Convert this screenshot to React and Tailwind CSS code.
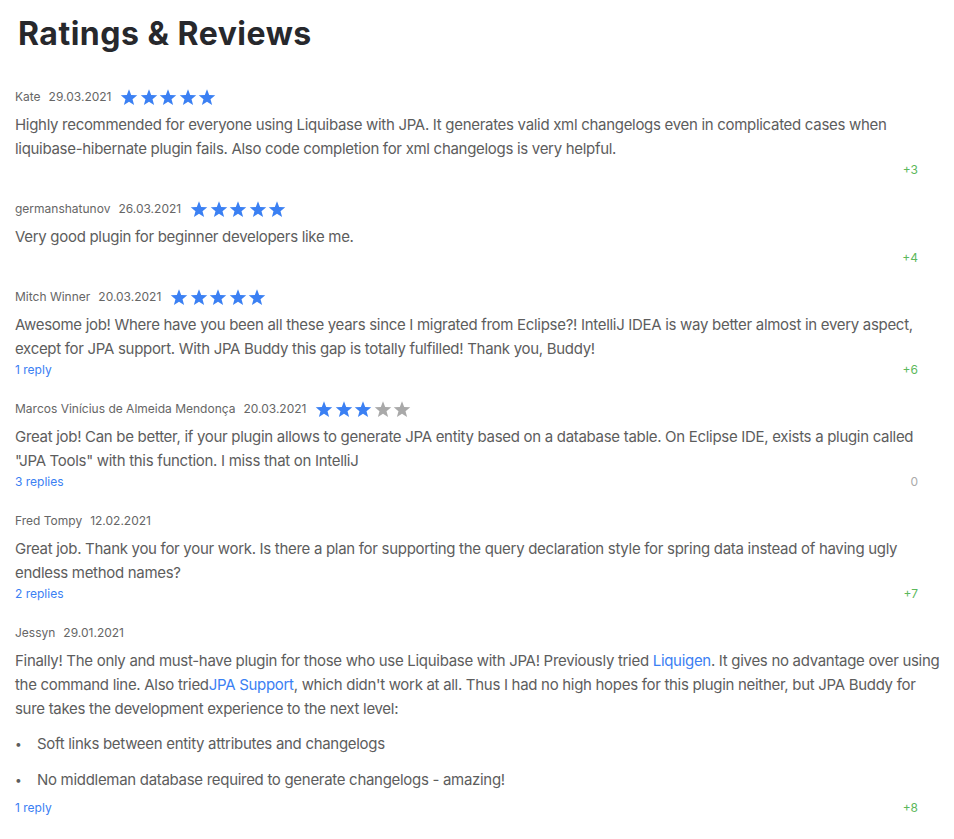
const reviews = [
  {
    author: 'Kate',
    date: '29.03.2021',
    rating: 5,
    body: ['Highly recommended for everyone using Liquibase with JPA. It generates valid xml changelogs even in complicated cases when liquibase-hibernate plugin fails. Also code completion for xml changelogs is very helpful.'],
    votes: '+3',
  },
  {
    author: 'germanshatunov',
    date: '26.03.2021',
    rating: 5,
    body: ['Very good plugin for beginner developers like me.'],
    votes: '+4',
  },
  {
    author: 'Mitch Winner',
    date: '20.03.2021',
    rating: 5,
    body: ['Awesome job! Where have you been all these years since I migrated from Eclipse?! IntelliJ IDEA is way better almost in every aspect, except for JPA support. With JPA Buddy this gap is totally fulfilled! Thank you, Buddy!'],
    replies: '1 reply',
    votes: '+6',
  },
  {
    author: 'Marcos Vinícius de Almeida Mendonça',
    date: '20.03.2021',
    rating: 3,
    body: ['Great job! Can be better, if your plugin allows to generate JPA entity based on a database table. On Eclipse IDE, exists a plugin called "JPA Tools" with this function. I miss that on IntelliJ'],
    replies: '3 replies',
    votes: '0',
  },
  {
    author: 'Fred Tompy',
    date: '12.02.2021',
    body: ['Great job. Thank you for your work. Is there a plan for supporting the query declaration style for spring data instead of having ugly endless method names?'],
    replies: '2 replies',
    votes: '+7',
  },
];

function Star({ on }) {
  return (
    <svg viewBox="0 0 24 24" className={on ? 'w-[18px] h-[18px] fill-[#3b80f3]' : 'w-[18px] h-[18px] fill-[#a9a9a9]'}>
      <path d="M12 1.8l2.9 7.6 8.1.4-6.3 5.1 2.1 7.9L12 18.3l-6.8 4.5 2.1-7.9L1 9.8l8.1-.4z" />
    </svg>
  );
}

function Meta({ author, date, rating }) {
  return (
    <div className="flex items-center h-5 text-xs text-[#666]">
      <span>{author}</span>
      <span className="ml-2">{date}</span>
      {rating && (
        <div className="flex ml-[9px] gap-[1.5px]">
          {[1, 2, 3, 4, 5].map(i => <Star key={i} on={i <= rating} />)}
        </div>
      )}
    </div>
  );
}

function Footer({ replies, votes }) {
  return (
    <div className="flex justify-between items-center h-[18px] text-xs pr-[28px]">
      <span className="text-[#3b80f3]">{replies}</span>
      <span className={votes === '0' ? 'text-[#aaa]' : 'text-[#5cb85c]'}>{votes}</span>
    </div>
  );
}

export default function App() {
  return (
    <div className="bg-white min-h-screen pl-[15px] pr-[8px] pt-[12px] font-['Inter','Liberation_Sans',sans-serif]">
      <h1 className="ml-[3px] text-[32px] leading-[44px] font-bold text-[#27282c] tracking-[0.5px]">Ratings &amp; Reviews</h1>
      <div className="mt-[31px] flex flex-col gap-5">
        {reviews.map((r, i) => (
          <div key={i}>
            <Meta {...r} />
            <p className="mt-[6px] text-[15px] leading-6 tracking-[-0.3px] text-[#5d5d5d]">{r.body[0]}</p>
            <Footer replies={r.replies} votes={r.votes} />
          </div>
        ))}
        <div>
          <Meta author="Jessyn" date="29.01.2021" />
          <p className="mt-[6px] text-[15px] leading-6 tracking-[-0.3px] text-[#5d5d5d]">
            Finally! The only and must-have plugin for those who use Liquibase with JPA! Previously tried{' '}
            <a className="text-[#3b80f3]">Liquigen</a>. It gives no advantage over using the command line. Also tried
            <a className="text-[#3b80f3]">JPA Support</a>, which didn't work at all. Thus I had no high hopes for this plugin neither, but JPA Buddy for sure takes the development experience to the next level:
          </p>
          <ul className="mt-[11px] mb-[7px] flex flex-col gap-3 text-[15px] leading-6 tracking-[-0.3px] text-[#5d5d5d]">
            <li className="flex"><span className="w-[22px] text-[12px]">•</span>Soft links between entity attributes and changelogs</li>
            <li className="flex"><span className="w-[22px] text-[12px]">•</span>No middleman database required to generate changelogs - amazing!</li>
          </ul>
          <Footer replies="1 reply" votes="+8" />
        </div>
      </div>
    </div>
  );
}
